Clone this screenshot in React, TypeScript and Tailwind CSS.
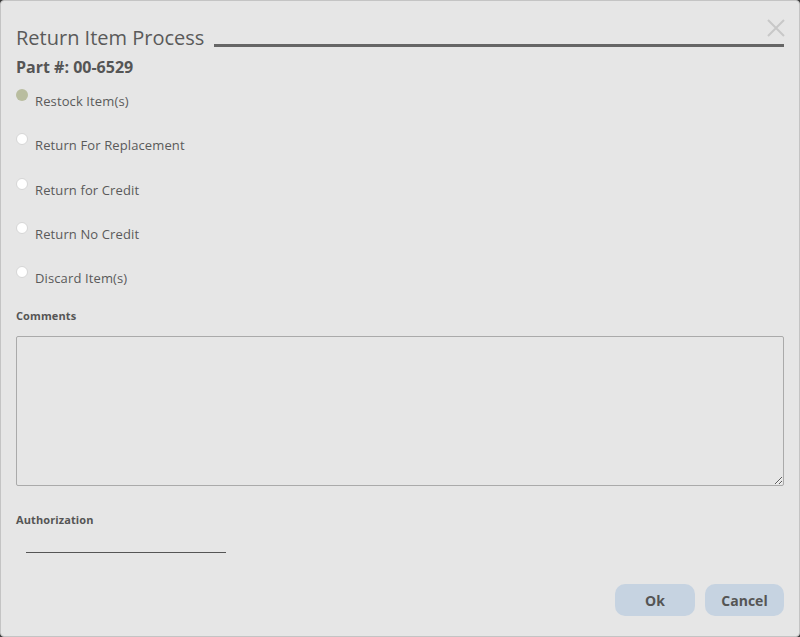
import { useState } from 'react';

const OPTIONS = [
  'Restock Item(s)',
  'Return For Replacement',
  'Return for Credit',
  'Return No Credit',
  'Discard Item(s)',
];

export default function App() {
  const [choice, setChoice] = useState(0);
  const [comments, setComments] = useState('');

  return (
    <main className="w-[800px] h-[637px] bg-[#3a3a3a] font-['Open_Sans',sans-serif] text-[#555]">
      <div className="w-full h-full bg-[#e6e6e6] border border-[#c4c4c4] rounded-[4px] flex flex-col px-[15px] pt-[22px]">
        {/* Title */}
        <div className="flex items-end h-[30px]">
          <h1 className="text-[20px] leading-[30px] text-[#5a5a5a] whitespace-nowrap pr-[10px]">Return Item Process</h1>
          <div className="flex-1 h-[3px] bg-[#666] mb-[6px]" />
          <button className="absolute right-[14px] top-[18px] text-[#c8c8c8]">
            <svg width="20" height="20" viewBox="0 0 20 20" stroke="currentColor" strokeWidth="2">
              <path d="M2 2 L18 18 M18 2 L2 18" />
            </svg>
          </button>
        </div>

        <div className="text-[16px] font-bold leading-[22px] mt-[3px] text-[#555]">Part #: 00-6529</div>

        {/* Options */}
        <div className="flex flex-col mt-[11px]">
          {OPTIONS.map((label, i) => (
            <label key={label} className="flex items-start h-[44.3px] cursor-pointer" onClick={() => setChoice(i)}>
              <span
                className={`w-[12px] h-[12px] rounded-full shrink-0 ${
                  choice === i ? 'bg-[#b9bd9f]' : 'bg-white border border-[#d6d6d6]'
                }`}
              />
              <span className="ml-[7px] mt-[3px] text-[13px] leading-[18px] tracking-[0.12px] text-[#5a5a5a]">{label}</span>
            </label>
          ))}
        </div>

        <div className="text-[11px] font-bold leading-[16px] mt-[-2px] tracking-[0.1px] text-[#555]">Comments</div>
        <textarea
          value={comments}
          onChange={(e) => setComments(e.target.value)}
          className="mt-[12px] h-[150px] bg-[#e6e6e6] border border-[#aaa] rounded-[2px] outline-none p-2 text-[13px]"
        />

        <div className="text-[11px] font-bold leading-[16px] mt-[26px] tracking-[0.1px] text-[#555]">Authorization</div>
        <div className="ml-[10px] mt-[24px] w-[200px] h-[1px] bg-[#555]" />

        <div className="flex justify-end gap-[10px] mt-[31px]">
          <button className="w-[80px] h-[32px] rounded-[10px] bg-[#c6d3e1] text-[14px] font-bold text-[#555]">Ok</button>
          <button className="w-[79px] h-[32px] rounded-[10px] bg-[#c6d3e1] text-[14px] font-bold text-[#555]">Cancel</button>
        </div>
      </div>
    </main>
  );
}
